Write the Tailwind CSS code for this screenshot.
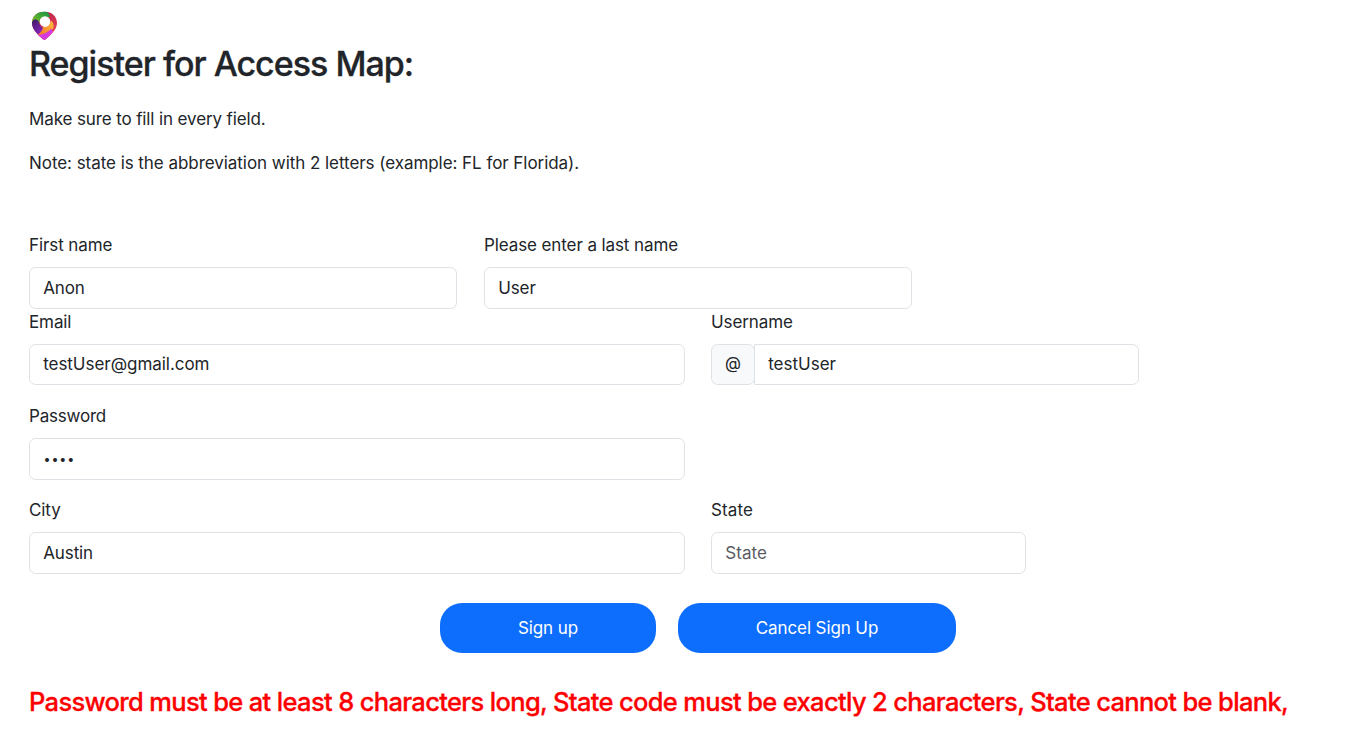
<!DOCTYPE html>
<html lang="en">
<head>
<meta charset="utf-8">
<title>Register for Access Map</title>
<script src="https://cdn.jsdelivr.net/npm/@tailwindcss/browser@4"></script>
</head>
<body class="bg-white font-['Inter',sans-serif] text-[17px] leading-[26px] text-[#212529] tracking-[-0.1px] h-[739px] overflow-hidden">
<main class="pl-[29px] pt-[11px]">
  <svg class="block ml-[2px] w-[27px] h-[30px]" viewBox="0 0 27 30">
    <defs>
      <clipPath id="pin"><path d="M13.5 0.8C6 0.8 1 5.6 1 12C1 19 8 24.5 11.8 28.3Q13.2 29.6 14.8 28.3C19 24.5 26 19 26 12C26 5.6 21 0.8 13.5 0.8Z"/></clipPath>
      <linearGradient id="green" x1="1" y1="0" x2="0" y2="1"><stop offset="0" stop-color="#0c8f48"/><stop offset="1" stop-color="#86c71d"/></linearGradient>
      <linearGradient id="violet" x1="0" y1="0" x2="0.6" y2="1"><stop offset="0" stop-color="#35195f"/><stop offset="1" stop-color="#9227c4"/></linearGradient>
      <linearGradient id="red" x1="0" y1="0" x2="0.6" y2="1"><stop offset="0" stop-color="#a3104a"/><stop offset="1" stop-color="#f04a55"/></linearGradient>
      <linearGradient id="amber" x1="0" y1="1" x2="1" y2="0"><stop offset="0" stop-color="#f5702c"/><stop offset="1" stop-color="#ffc23a"/></linearGradient>
    </defs>
    <g clip-path="url(#pin)">
      <rect width="27" height="30" fill="url(#red)"/>
      <path d="M0 0H15Q18 2 19 6L14 6Q8 6 8.5 13Q5 7 1 13L0 12Z" fill="url(#green)"/>
      <path d="M0 13Q3 5.5 7.5 10Q8 15 13 18L8 26L0 20Z" fill="url(#violet)"/>
      <path d="M6.5 24Q12 20 12 15.5Q19 16 20 9.5Q24 13 22 18L16 24Z" fill="url(#amber)"/>
      <path d="M6 24Q15 23.5 20.5 17.5L22 21L14 30Z" fill="#d43bdc"/>
    </g>
    <circle cx="14" cy="10.6" r="5.3" fill="#fff"/>
  </svg>
  <h1 class="text-[34px] leading-[42px] font-medium [-webkit-text-stroke:0.3px_#212529] tracking-[-1px] mt-[2px]">Register for Access Map:</h1>
  <p class="mt-[21px] tracking-[-0.12px]">Make sure to fill in every field.</p>
  <p class="mt-[18px] tracking-[-0.05px]">Note: state is the abbreviation with 2 letters (example: FL for Florida).</p>

  <form>
    <div class="mt-[56px] flex gap-[27px]">
      <label class="w-[428px]">First name
        <input value="Anon" class="mt-[9px] block h-[42px] w-full rounded-[6.6px] border border-[#dee2e6] px-[13.2px]">
      </label>
      <label class="w-[428px]">Please enter a last name
        <input value="User" class="mt-[9px] block h-[42px] w-full rounded-[6.6px] border border-[#dee2e6] px-[13.2px]">
      </label>
    </div>
    <div class="flex gap-[26px]">
      <label class="w-[656px]">Email
        <input value="testUser@gmail.com" class="mt-[9px] block h-[41px] w-full rounded-[6.6px] border border-[#dee2e6] px-[13.2px] pb-[2px] tracking-[-0.04px]">
      </label>
      <label class="w-[428px]">Username
        <span class="mt-[9px] flex h-[41px]">
          <span class="flex w-[44px] items-center justify-center rounded-[6.6px] border border-[#dee2e6] bg-[#f8f9fa] pb-[3px] text-[16.5px]">@</span>
          <input value="testUser" class="-ml-px min-w-0 flex-1 rounded-r-[6.6px] border border-[#dee2e6] bg-white px-[13.2px] pb-[2px] tracking-[0px]">
        </span>
      </label>
    </div>
    <label class="mt-[18px] block w-[656px] tracking-[-0.2px]">Password
      <input value="••••" class="mt-[9px] block h-[42px] w-full rounded-[6.6px] border border-[#dee2e6] pl-[13.5px] text-[12.5px] tracking-[0.9px]">
    </label>
    <div class="mt-[17px] flex gap-[26px]">
      <label class="w-[656px]">City
        <input value="Austin" class="mt-[9px] block h-[42px] w-full rounded-[6.6px] border border-[#dee2e6] px-[13.2px]">
      </label>
      <label class="w-[315px] tracking-[0.1px]">State
        <input placeholder="State" class="mt-[9px] block h-[42px] w-full rounded-[6.6px] border border-[#dee2e6] px-[13.2px] tracking-[0.1px] placeholder:text-[#595c5f]">
      </label>
    </div>
    <div class="ml-[411px] mt-[29px] flex gap-[22px] text-white">
      <button type="button" class="h-[50px] w-[216px] rounded-[22px] bg-[#0d6efd]">Sign up</button>
      <button type="button" class="h-[50px] w-[278px] rounded-[22px] bg-[#0d6efd]">Cancel Sign Up</button>
    </div>
  </form>
  <h2 class="mt-[33px] whitespace-nowrap text-[25.5px] font-medium [-webkit-text-stroke:0.3px_#ff0000] leading-[32px] tracking-[-0.66px] text-[#ff0000]">Password must be at least 8 characters long, State code must be exactly 2 characters, State cannot be blank,</h2>
</main>
</body>
</html>
